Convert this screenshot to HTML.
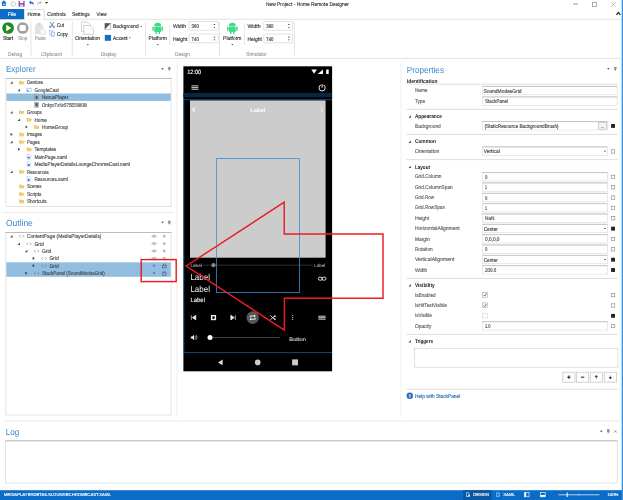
<!DOCTYPE html>
<html lang="en"><head><meta charset="utf-8"><title>New Project - Home Remote Designer</title>
<style>
html,body{margin:0;padding:0;background:#fff;overflow:hidden}
svg{display:block;will-change:transform;font-family:"Liberation Sans", sans-serif;text-rendering:geometricPrecision}
</style></head><body>
<svg width="623" height="500" viewBox="0 0 623 500">
<rect x="0.00" y="0.00" width="623.00" height="500.00" fill="#fff"/>
<path d="M3.9 0.2L1.2 2.9h0.8v3.1h3.8v-3.1h0.8z" fill="#1a6fd0" />
<rect x="3.30" y="3.60" width="1.20" height="1.50" fill="#fff"/>
<circle cx="13.20" cy="4.00" r="2.30" fill="#fff" stroke="#c4c4c4" stroke-width="0.9"/>
<rect x="18.60" y="0.90" width="6.00" height="5.70" fill="#8a3fb0"/>
<rect x="19.90" y="0.90" width="3.40" height="2.20" fill="#fff"/>
<rect x="20.10" y="4.40" width="3.00" height="2.20" fill="#e8d8f0"/>
<path d="M29 2.2l2-1.6v1.2c2.4 0 3.2 1.6 2.6 4c-0.2-1.6-1-2.4-2.6-2.4v1.2z" fill="#1a6fd0" />
<path d="M42 2.2l-2-1.6v1.2c-2.4 0-3.2 1.6-2.6 4c0.2-1.6 1-2.4 2.6-2.4v1.2z" fill="#c4c4c4" />
<path d="M45.10 1.90h3l-1.50 1.8z" fill="#222" />
<text x="266.00" y="6.27" font-size="5.5" fill="#333" textLength="83.00" lengthAdjust="spacingAndGlyphs" stroke="#333" stroke-width="0.14">New Project - Home Remote Designer</text>
<line x1="573.00" y1="4.00" x2="578.00" y2="4.00" stroke="#888" stroke-width="0.9"/>
<rect x="592.50" y="2.30" width="4.00" height="4.20" fill="none" stroke="#969696" stroke-width="0.8"/>
<path d="M611.2 2.3l4.5 4.5M615.7 2.3l-4.5 4.5" fill="none" stroke="#aaa" stroke-width="0.7" />
<path d="M616.4 14.8l2-2.4l2 2.4" fill="none" stroke="#222" stroke-width="1.2" />
<line x1="0.00" y1="19.30" x2="621.50" y2="19.30" stroke="#dadada" stroke-width="0.8"/>
<rect x="0.00" y="9.00" width="24.00" height="10.20" fill="#0b6cc7"/>
<text x="12.00" y="15.97" font-size="5.5" fill="#fff" text-anchor="middle" textLength="8.00" lengthAdjust="spacingAndGlyphs" stroke="#fff" stroke-width="0.14">File</text>
<path d="M24.6 19.7V9.6H44.2V19.7" fill="#fff" stroke="#d0d0d0" stroke-width="0.7" />
<text x="27.40" y="15.97" font-size="5.5" fill="#333" textLength="13.00" lengthAdjust="spacingAndGlyphs" stroke="#333" stroke-width="0.14">Home</text>
<text x="47.30" y="15.97" font-size="5.5" fill="#333" textLength="18.40" lengthAdjust="spacingAndGlyphs" stroke="#333" stroke-width="0.14">Controls</text>
<text x="72.00" y="15.97" font-size="5.5" fill="#333" textLength="17.60" lengthAdjust="spacingAndGlyphs" stroke="#333" stroke-width="0.14">Settings</text>
<text x="96.60" y="15.97" font-size="5.5" fill="#333" textLength="10.00" lengthAdjust="spacingAndGlyphs" stroke="#333" stroke-width="0.14">View</text>
<line x1="0.00" y1="58.40" x2="621.00" y2="58.40" stroke="#e0e0e0" stroke-width="0.9"/>
<line x1="31.00" y1="21.70" x2="31.00" y2="56.00" stroke="#dcdcdc" stroke-width="0.8"/>
<line x1="72.30" y1="21.70" x2="72.30" y2="56.00" stroke="#dcdcdc" stroke-width="0.8"/>
<line x1="145.60" y1="21.70" x2="145.60" y2="56.00" stroke="#dcdcdc" stroke-width="0.8"/>
<line x1="219.40" y1="21.70" x2="219.40" y2="56.00" stroke="#dcdcdc" stroke-width="0.8"/>
<line x1="294.40" y1="21.70" x2="294.40" y2="56.00" stroke="#dcdcdc" stroke-width="0.8"/>
<circle cx="8.10" cy="28.00" r="5.85" fill="#1e8a22"/>
<path d="M6.2 24.7v6.6l5.2-3.3z" fill="#fff" />
<circle cx="22.70" cy="28.00" r="5.85" fill="#a0a0a0"/>
<rect x="19.60" y="24.90" width="6.20" height="6.20" fill="#fff" rx="1.3"/>
<text x="3.10" y="39.97" font-size="5.5" fill="#222" textLength="10.00" lengthAdjust="spacingAndGlyphs" stroke="#222" stroke-width="0.14">Start</text>
<text x="17.90" y="39.97" font-size="5.5" fill="#9a9a9a" textLength="9.40" lengthAdjust="spacingAndGlyphs" stroke="#9a9a9a" stroke-width="0.14">Stop</text>
<text x="8.10" y="55.97" font-size="5.5" fill="#969ba6" textLength="14.10" lengthAdjust="spacingAndGlyphs" stroke="#969ba6" stroke-width="0.14">Debug</text>
<rect x="35.00" y="24.60" width="8.00" height="9.60" fill="#e2e2e2"/>
<rect x="37.20" y="23.00" width="3.60" height="2.60" fill="#d8d8d8" rx="0.6"/>
<path d="M40 28.6h3.6l2 2v3.8h-5.6z" fill="#f4f4f4" stroke="#d8d8d8" stroke-width="0.5" />
<text x="34.80" y="39.97" font-size="5.5" fill="#9c9c9c" textLength="10.80" lengthAdjust="spacingAndGlyphs" stroke="#9c9c9c" stroke-width="0.14">Paste</text>
<path d="M50 22l3.4 4.6M54.2 22l-3.4 4.6" fill="none" stroke="#555" stroke-width="0.7" />
<circle cx="50.20" cy="26.90" r="0.90" fill="none" stroke="#2a6fc0" stroke-width="0.6"/>
<circle cx="53.80" cy="26.90" r="0.90" fill="none" stroke="#2a6fc0" stroke-width="0.6"/>
<text x="56.90" y="26.77" font-size="5.5" fill="#333" textLength="7.10" lengthAdjust="spacingAndGlyphs" stroke="#333" stroke-width="0.14">Cut</text>
<rect x="49.40" y="30.40" width="3.00" height="3.80" fill="#fff" stroke="#9ab" stroke-width="0.5"/>
<rect x="51.20" y="32.00" width="3.20" height="4.20" fill="#eaf2fb" stroke="#5a8fc8" stroke-width="0.5"/>
<text x="56.90" y="35.87" font-size="5.5" fill="#333" textLength="11.10" lengthAdjust="spacingAndGlyphs" stroke="#333" stroke-width="0.14">Copy</text>
<text x="41.00" y="55.97" font-size="5.5" fill="#969ba6" textLength="20.90" lengthAdjust="spacingAndGlyphs" stroke="#969ba6" stroke-width="0.14">Clipboard</text>
<path d="M81.5 22h6l3 3v6.5h-9z" fill="#fff" stroke="#c4c4c4" stroke-width="0.7" />
<path d="M83.8 25.5h6.4l3.2 3v5.8h-9.6z" fill="#fff" stroke="#bcbcbc" stroke-width="0.7" />
<text x="75.30" y="39.97" font-size="5.5" fill="#333" textLength="24.70" lengthAdjust="spacingAndGlyphs" stroke="#333" stroke-width="0.14">Orientation</text>
<path d="M86.80 44.00h2l-1.00 1.2z" fill="#333" />
<rect x="104.90" y="23.30" width="5.90" height="6.00" fill="#fff" stroke="#999" stroke-width="0.6"/>
<path d="M104.9 23.3h5.9l-5.9 6z" fill="#555" />
<text x="113.10" y="28.17" font-size="5.5" fill="#333" textLength="25.60" lengthAdjust="spacingAndGlyphs" stroke="#333" stroke-width="0.14">Background</text>
<path d="M140.25 25.95h1.9l-0.95 1.1z" fill="#333" />
<rect x="104.80" y="34.90" width="6.20" height="5.90" fill="#1a6fc4"/>
<text x="113.10" y="39.77" font-size="5.5" fill="#333" textLength="14.60" lengthAdjust="spacingAndGlyphs" stroke="#333" stroke-width="0.14">Accent</text>
<path d="M128.85 37.45h1.9l-0.95 1.1z" fill="#333" />
<text x="101.00" y="55.97" font-size="5.5" fill="#969ba6" textLength="15.30" lengthAdjust="spacingAndGlyphs" stroke="#969ba6" stroke-width="0.14">Display</text>
<path d="M154.30 26.00a3.4 3.2 0 0 1 6.8 0z" fill="#3ddc84" />
<line x1="155.10" y1="22.60" x2="156.10" y2="23.80" stroke="#3ddc84" stroke-width="0.5"/>
<line x1="160.30" y1="22.60" x2="159.30" y2="23.80" stroke="#3ddc84" stroke-width="0.5"/>
<rect x="154.30" y="26.50" width="6.80" height="5.60" fill="#3ddc84" rx="0.6"/>
<rect x="152.40" y="26.50" width="1.50" height="4.40" fill="#3ddc84" rx="0.7"/>
<rect x="161.50" y="26.50" width="1.50" height="4.40" fill="#3ddc84" rx="0.7"/>
<rect x="155.40" y="31.00" width="1.50" height="3.20" fill="#3ddc84" rx="0.7"/>
<rect x="158.50" y="31.00" width="1.50" height="3.20" fill="#3ddc84" rx="0.7"/>
<text x="148.50" y="39.97" font-size="5.5" fill="#333" textLength="18.40" lengthAdjust="spacingAndGlyphs" stroke="#333" stroke-width="0.14">Platform</text>
<path d="M156.80 44.00h2l-1.00 1.2z" fill="#333" />
<line x1="169.80" y1="23.00" x2="169.80" y2="45.00" stroke="#dcdcdc" stroke-width="0.7"/>
<text x="172.90" y="27.87" font-size="5.5" fill="#333" textLength="13.10" lengthAdjust="spacingAndGlyphs" stroke="#333" stroke-width="0.14">Width</text>
<text x="172.90" y="40.57" font-size="5.5" fill="#333" textLength="14.40" lengthAdjust="spacingAndGlyphs" stroke="#333" stroke-width="0.14">Height</text>
<rect x="189.10" y="21.60" width="29.00" height="8.70" fill="#fff" stroke="#d6d6d6" stroke-width="0.7" rx="0.6"/>
<text x="191.60" y="28.02" font-size="5.5" fill="#333" textLength="7.20" lengthAdjust="spacingAndGlyphs" stroke="#333" stroke-width="0.14">360</text>
<path d="M213.50 25.00h1.8l-0.9 -1.2z" fill="#222" />
<path d="M213.50 26.90h1.8l-0.9 1.2z" fill="#222" />
<rect x="189.10" y="34.10" width="29.00" height="8.70" fill="#fff" stroke="#d6d6d6" stroke-width="0.7" rx="0.6"/>
<text x="191.60" y="40.52" font-size="5.5" fill="#333" textLength="7.20" lengthAdjust="spacingAndGlyphs" stroke="#333" stroke-width="0.14">740</text>
<path d="M213.50 37.50h1.8l-0.9 -1.2z" fill="#222" />
<path d="M213.50 39.40h1.8l-0.9 1.2z" fill="#222" />
<text x="175.00" y="55.97" font-size="5.5" fill="#969ba6" textLength="14.80" lengthAdjust="spacingAndGlyphs" stroke="#969ba6" stroke-width="0.14">Design</text>
<path d="M228.90 26.00a3.4 3.2 0 0 1 6.8 0z" fill="#3ddc84" />
<line x1="229.70" y1="22.60" x2="230.70" y2="23.80" stroke="#3ddc84" stroke-width="0.5"/>
<line x1="234.90" y1="22.60" x2="233.90" y2="23.80" stroke="#3ddc84" stroke-width="0.5"/>
<rect x="228.90" y="26.50" width="6.80" height="5.60" fill="#3ddc84" rx="0.6"/>
<rect x="227.00" y="26.50" width="1.50" height="4.40" fill="#3ddc84" rx="0.7"/>
<rect x="236.10" y="26.50" width="1.50" height="4.40" fill="#3ddc84" rx="0.7"/>
<rect x="230.00" y="31.00" width="1.50" height="3.20" fill="#3ddc84" rx="0.7"/>
<rect x="233.10" y="31.00" width="1.50" height="3.20" fill="#3ddc84" rx="0.7"/>
<text x="223.10" y="39.97" font-size="5.5" fill="#333" textLength="18.40" lengthAdjust="spacingAndGlyphs" stroke="#333" stroke-width="0.14">Platform</text>
<path d="M231.30 44.00h2l-1.00 1.2z" fill="#333" />
<line x1="244.40" y1="23.00" x2="244.40" y2="45.00" stroke="#dcdcdc" stroke-width="0.7"/>
<text x="247.50" y="27.87" font-size="5.5" fill="#333" textLength="13.10" lengthAdjust="spacingAndGlyphs" stroke="#333" stroke-width="0.14">Width</text>
<text x="247.50" y="40.57" font-size="5.5" fill="#333" textLength="14.40" lengthAdjust="spacingAndGlyphs" stroke="#333" stroke-width="0.14">Height</text>
<rect x="263.80" y="21.60" width="28.80" height="8.70" fill="#fff" stroke="#d6d6d6" stroke-width="0.7" rx="0.6"/>
<text x="266.30" y="28.02" font-size="5.5" fill="#333" textLength="7.20" lengthAdjust="spacingAndGlyphs" stroke="#333" stroke-width="0.14">360</text>
<path d="M288.00 25.00h1.8l-0.9 -1.2z" fill="#222" />
<path d="M288.00 26.90h1.8l-0.9 1.2z" fill="#222" />
<rect x="263.80" y="34.10" width="28.80" height="8.70" fill="#fff" stroke="#d6d6d6" stroke-width="0.7" rx="0.6"/>
<text x="266.30" y="40.52" font-size="5.5" fill="#333" textLength="7.20" lengthAdjust="spacingAndGlyphs" stroke="#333" stroke-width="0.14">740</text>
<path d="M288.00 37.50h1.8l-0.9 -1.2z" fill="#222" />
<path d="M288.00 39.40h1.8l-0.9 1.2z" fill="#222" />
<text x="246.30" y="55.97" font-size="5.5" fill="#969ba6" textLength="20.60" lengthAdjust="spacingAndGlyphs" stroke="#969ba6" stroke-width="0.14">Simulator</text>
<rect x="176.10" y="62.00" width="1.70" height="355.00" fill="#f5f5f5"/>
<rect x="399.80" y="62.00" width="1.70" height="355.00" fill="#f5f5f5"/>
<line x1="2.50" y1="212.40" x2="173.80" y2="212.40" stroke="#e6e6e6" stroke-width="0.9"/>
<line x1="2.50" y1="421.00" x2="619.50" y2="421.00" stroke="#e8e8e8" stroke-width="0.9"/>
<rect x="619.40" y="59.00" width="2.20" height="362.00" fill="#f7f9fc"/>
<text x="6.00" y="72.29" font-size="8.9" fill="#3a88ca" textLength="29.60" lengthAdjust="spacingAndGlyphs">Explorer</text>
<path d="M161.20 68.25h2.6l-1.30 1.5z" fill="#3a3a3a" />
<rect x="168.70" y="67.40" width="1.40" height="2.20" fill="#999" stroke="#555" stroke-width="0.4"/>
<line x1="169.40" y1="69.60" x2="169.40" y2="70.90" stroke="#555" stroke-width="0.5"/>
<rect x="5.90" y="78.40" width="165.20" height="128.00" fill="#fff" stroke="#dcdcdc" stroke-width="0.8"/>
<line x1="5.50" y1="78.40" x2="171.50" y2="78.40" stroke="#b2b2b2" stroke-width="0.8"/>
<rect x="6.40" y="93.50" width="164.30" height="7.40" fill="#90bde0"/>
<path d="M12.65 81.25v2.5h-2.5z" fill="#444" />
<path d="M19.20 84.40v-3.6h1.6l0.5 0.6h2.4v1" fill="#e6c468" />
<path d="M19.20 84.40l1.2-2.6h4.2l-1.2 2.6z" fill="#f2cc66" />
<text x="26.90" y="84.37" font-size="5.5" fill="#4a4a4a" textLength="16.20" lengthAdjust="spacingAndGlyphs" stroke="#4a4a4a" stroke-width="0.14">Devices</text>
<path d="M20.15 88.68v2.5h-2.5z" fill="#444" />
<rect x="26.90" y="88.23" width="4.20" height="3.30" fill="#fff" stroke="#7ab0e8" stroke-width="0.55"/>
<rect x="26.90" y="90.13" width="1.50" height="1.40" fill="#3c86d8"/>
<text x="34.40" y="91.80" font-size="5.5" fill="#4a4a4a" textLength="24.40" lengthAdjust="spacingAndGlyphs" stroke="#4a4a4a" stroke-width="0.14">GoogleCast</text>
<rect x="34.50" y="94.66" width="4.20" height="5.20" fill="#c4c4c4" stroke="#8c8c8c" stroke-width="0.4"/>
<rect x="35.50" y="95.66" width="2.20" height="3.40" fill="#555"/>
<text x="41.90" y="99.23" font-size="5.5" fill="#4a4a4a" textLength="26.30" lengthAdjust="spacingAndGlyphs" stroke="#4a4a4a" stroke-width="0.14">NexusPlayer</text>
<rect x="34.50" y="102.09" width="4.20" height="5.20" fill="#c4c4c4" stroke="#8c8c8c" stroke-width="0.4"/>
<rect x="35.50" y="103.09" width="2.20" height="3.40" fill="#555"/>
<text x="41.90" y="106.66" font-size="5.5" fill="#4a4a4a" textLength="45.00" lengthAdjust="spacingAndGlyphs" stroke="#4a4a4a" stroke-width="0.14">OnkyoTxNr575E5080B</text>
<path d="M12.65 110.97v2.5h-2.5z" fill="#444" />
<path d="M19.20 114.12v-3.6h1.6l0.5 0.6h2.4v1" fill="#e6c468" />
<path d="M19.20 114.12l1.2-2.6h4.2l-1.2 2.6z" fill="#f2cc66" />
<text x="26.90" y="114.09" font-size="5.5" fill="#4a4a4a" textLength="15.00" lengthAdjust="spacingAndGlyphs" stroke="#4a4a4a" stroke-width="0.14">Groups</text>
<path d="M20.15 118.40v2.5h-2.5z" fill="#444" />
<path d="M26.70 121.55v-3.6h1.6l0.5 0.6h2.4v1" fill="#e6c468" />
<path d="M26.70 121.55l1.2-2.6h4.2l-1.2 2.6z" fill="#f2cc66" />
<text x="34.40" y="121.52" font-size="5.5" fill="#4a4a4a" textLength="12.50" lengthAdjust="spacingAndGlyphs" stroke="#4a4a4a" stroke-width="0.14">Home</text>
<path d="M25.60 125.38v3.2l2 -1.60z" fill="#333" />
<rect x="34.20" y="125.68" width="4.80" height="3.30" fill="#f2cc6c"/>
<rect x="34.20" y="125.08" width="2.00" height="0.90" fill="#e8c060"/>
<text x="41.90" y="128.95" font-size="5.5" fill="#4a4a4a" textLength="26.30" lengthAdjust="spacingAndGlyphs" stroke="#4a4a4a" stroke-width="0.14">HomeGroup</text>
<path d="M10.60 132.81v3.2l2 -1.60z" fill="#333" />
<rect x="19.20" y="133.11" width="4.80" height="3.30" fill="#f2cc6c"/>
<rect x="19.20" y="132.51" width="2.00" height="0.90" fill="#e8c060"/>
<text x="26.90" y="136.38" font-size="5.5" fill="#4a4a4a" textLength="15.30" lengthAdjust="spacingAndGlyphs" stroke="#4a4a4a" stroke-width="0.14">Images</text>
<path d="M12.65 140.69v2.5h-2.5z" fill="#444" />
<path d="M19.20 143.84v-3.6h1.6l0.5 0.6h2.4v1" fill="#e6c468" />
<path d="M19.20 143.84l1.2-2.6h4.2l-1.2 2.6z" fill="#f2cc66" />
<text x="26.90" y="143.81" font-size="5.5" fill="#4a4a4a" textLength="12.80" lengthAdjust="spacingAndGlyphs" stroke="#4a4a4a" stroke-width="0.14">Pages</text>
<path d="M18.10 147.67v3.2l2 -1.60z" fill="#333" />
<rect x="26.70" y="147.97" width="4.80" height="3.30" fill="#f2cc6c"/>
<rect x="26.70" y="147.37" width="2.00" height="0.90" fill="#e8c060"/>
<text x="34.40" y="151.24" font-size="5.5" fill="#4a4a4a" textLength="21.80" lengthAdjust="spacingAndGlyphs" stroke="#4a4a4a" stroke-width="0.14">Templates</text>
<path d="M27.10 154.30h2.4l1.2 1.2v3.6h-3.6z" fill="#fff" stroke="#9ab4d0" stroke-width="0.45" />
<circle cx="28.70" cy="157.50" r="1.10" fill="#2a6fc0"/>
<text x="34.40" y="158.67" font-size="5.5" fill="#4a4a4a" textLength="32.70" lengthAdjust="spacingAndGlyphs" stroke="#4a4a4a" stroke-width="0.14">MainPage.xaml</text>
<path d="M27.10 161.73h2.4l1.2 1.2v3.6h-3.6z" fill="#fff" stroke="#9ab4d0" stroke-width="0.45" />
<circle cx="28.70" cy="164.93" r="1.10" fill="#2a6fc0"/>
<text x="34.40" y="166.10" font-size="5.5" fill="#4a4a4a" textLength="95.80" lengthAdjust="spacingAndGlyphs" stroke="#4a4a4a" stroke-width="0.14">MediaPlayerDetailsLoungeChromeCast.xaml</text>
<path d="M12.65 170.41v2.5h-2.5z" fill="#444" />
<path d="M19.20 173.56v-3.6h1.6l0.5 0.6h2.4v1" fill="#e6c468" />
<path d="M19.20 173.56l1.2-2.6h4.2l-1.2 2.6z" fill="#f2cc66" />
<text x="26.90" y="173.53" font-size="5.5" fill="#4a4a4a" textLength="22.00" lengthAdjust="spacingAndGlyphs" stroke="#4a4a4a" stroke-width="0.14">Resources</text>
<path d="M27.10 176.59h2.4l1.2 1.2v3.6h-3.6z" fill="#fff" stroke="#9ab4d0" stroke-width="0.45" />
<circle cx="28.70" cy="179.79" r="1.10" fill="#2a6fc0"/>
<text x="34.40" y="180.96" font-size="5.5" fill="#4a4a4a" textLength="33.50" lengthAdjust="spacingAndGlyphs" stroke="#4a4a4a" stroke-width="0.14">Resources.xaml</text>
<rect x="19.20" y="185.12" width="4.80" height="3.30" fill="#f2cc6c"/>
<rect x="19.20" y="184.52" width="2.00" height="0.90" fill="#e8c060"/>
<text x="26.90" y="188.39" font-size="5.5" fill="#4a4a4a" textLength="14.50" lengthAdjust="spacingAndGlyphs" stroke="#4a4a4a" stroke-width="0.14">Scenes</text>
<path d="M19.20 195.85v-3.6h1.6l0.5 0.6h2.4v1" fill="#e6c468" />
<path d="M19.20 195.85l1.2-2.6h4.2l-1.2 2.6z" fill="#f2cc66" />
<text x="26.90" y="195.82" font-size="5.5" fill="#4a4a4a" textLength="14.50" lengthAdjust="spacingAndGlyphs" stroke="#4a4a4a" stroke-width="0.14">Scripts</text>
<rect x="19.20" y="199.98" width="4.80" height="3.30" fill="#f2cc6c"/>
<rect x="19.20" y="199.38" width="2.00" height="0.90" fill="#e8c060"/>
<text x="26.90" y="203.25" font-size="5.5" fill="#4a4a4a" textLength="19.60" lengthAdjust="spacingAndGlyphs" stroke="#4a4a4a" stroke-width="0.14">Shortcuts</text>
<text x="6.00" y="226.09" font-size="8.9" fill="#3a88ca" textLength="26.80" lengthAdjust="spacingAndGlyphs">Outline</text>
<path d="M161.20 221.85h2.6l-1.30 1.5z" fill="#3a3a3a" />
<rect x="168.70" y="221.00" width="1.40" height="2.20" fill="#999" stroke="#555" stroke-width="0.4"/>
<line x1="169.40" y1="223.20" x2="169.40" y2="224.50" stroke="#555" stroke-width="0.5"/>
<rect x="5.90" y="232.50" width="165.20" height="182.50" fill="#fff" stroke="#dcdcdc" stroke-width="0.8"/>
<line x1="5.50" y1="232.50" x2="171.50" y2="232.50" stroke="#b2b2b2" stroke-width="0.8"/>
<rect x="6.40" y="262.30" width="164.30" height="14.50" fill="#90bde0"/>
<path d="M12.55 235.05v2.5h-2.5z" fill="#444" />
<path d="M20.60 235.00l-1.3 1.3l1.3 1.3M22.60 235.00l1.3 1.3l-1.3 1.3" fill="none" stroke="#555" stroke-width="0.5" />
<text x="26.90" y="238.17" font-size="5.5" fill="#4a4a4a" textLength="74.60" lengthAdjust="spacingAndGlyphs" stroke="#4a4a4a" stroke-width="0.14">ContentPage (MediaPlayerDetails)</text>
<path d="M151.6 236.20q2.5 -2.6 5 0q-2.5 2.6 -5 0z" fill="#fff" stroke="#777" stroke-width="0.4" />
<circle cx="154.10" cy="236.20" r="0.80" fill="none" stroke="#777" stroke-width="0.4"/>
<circle cx="164.30" cy="236.20" r="0.90" fill="none" stroke="#555" stroke-width="0.5"/>
<path d="M19.95 242.43v2.5h-2.5z" fill="#444" />
<path d="M28.10 242.38l-1.3 1.3l1.3 1.3M30.10 242.38l1.3 1.3l-1.3 1.3" fill="none" stroke="#555" stroke-width="0.5" />
<text x="34.40" y="245.55" font-size="5.5" fill="#4a4a4a" textLength="9.40" lengthAdjust="spacingAndGlyphs" stroke="#4a4a4a" stroke-width="0.14">Grid</text>
<path d="M151.6 243.58q2.5 -2.6 5 0q-2.5 2.6 -5 0z" fill="#fff" stroke="#777" stroke-width="0.4" />
<circle cx="154.10" cy="243.58" r="0.80" fill="none" stroke="#777" stroke-width="0.4"/>
<circle cx="164.30" cy="243.58" r="0.90" fill="none" stroke="#555" stroke-width="0.5"/>
<path d="M27.35 249.81v2.5h-2.5z" fill="#444" />
<path d="M35.60 249.76l-1.3 1.3l1.3 1.3M37.60 249.76l1.3 1.3l-1.3 1.3" fill="none" stroke="#555" stroke-width="0.5" />
<text x="41.90" y="252.93" font-size="5.5" fill="#4a4a4a" textLength="9.40" lengthAdjust="spacingAndGlyphs" stroke="#4a4a4a" stroke-width="0.14">Grid</text>
<path d="M151.6 250.96q2.5 -2.6 5 0q-2.5 2.6 -5 0z" fill="#fff" stroke="#777" stroke-width="0.4" />
<circle cx="154.10" cy="250.96" r="0.80" fill="none" stroke="#777" stroke-width="0.4"/>
<circle cx="164.30" cy="250.96" r="0.90" fill="none" stroke="#555" stroke-width="0.5"/>
<path d="M32.70 256.74v3.2l2 -1.60z" fill="#333" />
<path d="M43.10 257.14l-1.3 1.3l1.3 1.3M45.10 257.14l1.3 1.3l-1.3 1.3" fill="none" stroke="#555" stroke-width="0.5" />
<text x="49.40" y="260.31" font-size="5.5" fill="#4a4a4a" textLength="9.40" lengthAdjust="spacingAndGlyphs" stroke="#4a4a4a" stroke-width="0.14">Grid</text>
<path d="M151.6 258.34q2.5 -2.6 5 0q-2.5 2.6 -5 0z" fill="#fff" stroke="#777" stroke-width="0.4" />
<circle cx="154.10" cy="258.34" r="0.80" fill="none" stroke="#777" stroke-width="0.4"/>
<circle cx="164.30" cy="258.34" r="0.90" fill="none" stroke="#555" stroke-width="0.5"/>
<path d="M32.70 264.12v3.2l2 -1.60z" fill="#333" />
<path d="M43.10 264.52l-1.3 1.3l1.3 1.3M45.10 264.52l1.3 1.3l-1.3 1.3" fill="none" stroke="#555" stroke-width="0.5" />
<text x="49.40" y="267.69" font-size="5.5" fill="#4a4a4a" textLength="9.40" lengthAdjust="spacingAndGlyphs" stroke="#4a4a4a" stroke-width="0.14">Grid</text>
<circle cx="154.10" cy="265.72" r="0.80" fill="none" stroke="#445" stroke-width="0.5"/>
<rect x="162.70" y="265.52" width="3.40" height="2.40" fill="none" stroke="#445" stroke-width="0.5"/>
<path d="M163.3 265.52a1.1 1.6 0 0 1 2.2 0" fill="none" stroke="#445" stroke-width="0.5" />
<path d="M25.30 271.50v3.2l2 -1.60z" fill="#333" />
<path d="M35.60 271.90l-1.3 1.3l1.3 1.3M37.60 271.90l1.3 1.3l-1.3 1.3" fill="none" stroke="#555" stroke-width="0.5" />
<text x="41.90" y="275.07" font-size="5.5" fill="#4a4a4a" textLength="63.00" lengthAdjust="spacingAndGlyphs" stroke="#4a4a4a" stroke-width="0.14">StackPanel (SoundModesGrid)</text>
<circle cx="154.10" cy="273.10" r="0.80" fill="none" stroke="#445" stroke-width="0.5"/>
<rect x="162.70" y="272.90" width="3.40" height="2.40" fill="none" stroke="#445" stroke-width="0.5"/>
<path d="M163.3 272.90a1.1 1.6 0 0 1 2.2 0" fill="none" stroke="#445" stroke-width="0.5" />
<rect x="183.40" y="66.30" width="148.70" height="305.00" fill="#000"/>
<text x="187.20" y="73.82" font-size="6.2" fill="#fff" textLength="14.00" lengthAdjust="spacingAndGlyphs" stroke="#fff" stroke-width="0.14">12:00</text>
<path d="M311.3 69.6h5.6l-2.8 4.2z" fill="#fff" />
<path d="M323 69.6v4.3h-5.3z" fill="#fff" />
<rect x="326.20" y="69.50" width="2.50" height="4.50" fill="#fff"/>
<rect x="191.40" y="85.30" width="7.00" height="1.10" fill="#bdbdbd"/>
<rect x="191.40" y="87.00" width="7.00" height="1.10" fill="#bdbdbd"/>
<rect x="191.40" y="88.70" width="7.00" height="1.10" fill="#bdbdbd"/>
<circle cx="322.10" cy="87.90" r="3.10" fill="none" stroke="#fff" stroke-width="0.9"/>
<rect x="320.90" y="83.60" width="2.40" height="3.40" fill="#000"/>
<line x1="322.10" y1="84.10" x2="322.10" y2="87.80" stroke="#fff" stroke-width="0.9"/>
<rect x="183.40" y="92.90" width="148.70" height="4.30" fill="#0a2540"/>
<rect x="190.00" y="100.40" width="135.60" height="157.30" fill="#cccccc"/>
<path d="M194.8 107.7l-2 2l2 2" fill="none" stroke="#fff" stroke-width="1.1" />
<text x="250.20" y="111.70" font-size="5.6" fill="#fff" font-weight="700" textLength="15.00" lengthAdjust="spacingAndGlyphs">Label</text>
<circle cx="321.80" cy="107.80" r="0.65" fill="#fff"/>
<circle cx="321.80" cy="109.70" r="0.65" fill="#fff"/>
<circle cx="321.80" cy="111.60" r="0.65" fill="#fff"/>
<line x1="203.00" y1="265.20" x2="313.00" y2="265.20" stroke="#444" stroke-width="0.7"/>
<text x="190.40" y="266.68" font-size="4.4" fill="#999" textLength="11.50" lengthAdjust="spacingAndGlyphs" stroke="#999" stroke-width="0.14">Label</text>
<circle cx="213.50" cy="265.20" r="2.10" fill="#888"/>
<text x="314.10" y="266.68" font-size="4.4" fill="#999" textLength="11.20" lengthAdjust="spacingAndGlyphs" stroke="#999" stroke-width="0.14">Label</text>
<text x="190.40" y="279.68" font-size="8.6" fill="#f0f0f0" textLength="19.60" lengthAdjust="spacingAndGlyphs">Label</text>
<text x="190.40" y="291.98" font-size="8.6" fill="#f0f0f0" textLength="19.60" lengthAdjust="spacingAndGlyphs">Label</text>
<text x="190.40" y="302.32" font-size="6.2" fill="#e8e8e8" textLength="14.60" lengthAdjust="spacingAndGlyphs" stroke="#e8e8e8" stroke-width="0.14">Label</text>
<rect x="318.40" y="277.20" width="4.00" height="3.00" fill="none" stroke="#f0f0f0" stroke-width="0.9" rx="1.5"/>
<rect x="322.00" y="277.20" width="4.00" height="3.00" fill="none" stroke="#f0f0f0" stroke-width="0.9" rx="1.5"/>
<path d="M191.3 315.3v4.6M195.8 315.3v4.6l-3.4-2.3z" fill="#eee" stroke="#eee" stroke-width="0.7" />
<rect x="210.90" y="315.00" width="5.20" height="5.20" fill="#eee"/>
<rect x="212.40" y="316.30" width="2.20" height="2.60" fill="#000"/>
<path d="M235.3 315.3v4.6M230.8 315.3v4.6l3.4-2.3z" fill="#eee" stroke="#eee" stroke-width="0.7" />
<circle cx="252.70" cy="317.60" r="6.30" fill="#555"/>
<path d="M250.2 317.4v-1.4h4.4M255.2 317.8v1.4h-4.4" fill="none" stroke="#fff" stroke-width="0.9" />
<path d="M254.2 314.6l1.6 1.4l-1.6 1.4zM251.2 317.8l-1.6 1.4l1.6 1.4z" fill="#fff" />
<path d="M270.4 315.6l4.6 4.2M270.4 319.8l4.6-4.2" fill="none" stroke="#eee" stroke-width="0.9" />
<path d="M275.6 315v1.9h-1.9zM275.6 320.4v-1.9h-1.9z" fill="#eee" />
<circle cx="292.70" cy="315.60" r="0.55" fill="#eee"/>
<circle cx="292.70" cy="317.60" r="0.55" fill="#eee"/>
<circle cx="292.70" cy="319.60" r="0.55" fill="#eee"/>
<rect x="318.30" y="315.70" width="7.30" height="1.00" fill="#ccc"/>
<rect x="318.30" y="317.20" width="7.30" height="1.00" fill="#ccc"/>
<rect x="318.30" y="318.70" width="7.30" height="1.00" fill="#ccc"/>
<path d="M190.8 336.4h1.4l1.9-1.7v5.6l-1.9-1.7h-1.4z" fill="#eee" />
<path d="M195 336q1.3 1.5 0 3M195.9 334.9q2.3 2.6 0 5.2" fill="none" stroke="#eee" stroke-width="0.55" />
<line x1="210.00" y1="337.60" x2="280.00" y2="337.60" stroke="#666" stroke-width="0.7"/>
<circle cx="210.00" cy="337.50" r="2.50" fill="#fff"/>
<text x="289.30" y="340.76" font-size="5.2" fill="#ccc" textLength="16.70" lengthAdjust="spacingAndGlyphs" stroke="#ccc" stroke-width="0.14">Button</text>
<path d="M222.6 359.6v5.6l-4.6-2.8z" fill="#ddd" />
<circle cx="257.70" cy="362.40" r="2.80" fill="#ccc"/>
<rect x="292.10" y="359.40" width="5.90" height="5.90" fill="#ccc"/>
<path d="M332.1 99.7H183.8V352.6H332.1" fill="none" stroke="#1f6fb5" stroke-width="0.65" />
<rect x="216.40" y="158.60" width="83.10" height="134.00" fill="none" stroke="#3d8ad0" stroke-width="0.8"/>
<text x="406.80" y="72.79" font-size="8.9" fill="#3a88ca" textLength="37.20" lengthAdjust="spacingAndGlyphs">Properties</text>
<path d="M607.10 68.35h2.6l-1.30 1.5z" fill="#3a3a3a" />
<rect x="614.70" y="67.50" width="1.40" height="2.20" fill="#999" stroke="#555" stroke-width="0.4"/>
<line x1="615.40" y1="69.70" x2="615.40" y2="71.00" stroke="#555" stroke-width="0.5"/>
<text x="406.80" y="83.27" font-size="5.5" fill="#222" font-weight="700" textLength="30.80" lengthAdjust="spacingAndGlyphs">Identification</text>
<line x1="406.50" y1="84.20" x2="617.80" y2="84.20" stroke="#d6d6d6" stroke-width="0.8"/>
<text x="414.90" y="92.47" font-size="5.5" fill="#606060" textLength="12.60" lengthAdjust="spacingAndGlyphs" stroke="#606060" stroke-width="0.14">Name</text>
<rect x="482.30" y="86.30" width="134.90" height="8.40" fill="#fff" stroke="#dedede" stroke-width="0.7"/>
<line x1="482.30" y1="86.30" x2="617.20" y2="86.30" stroke="#b4b4b4" stroke-width="0.7"/>
<text x="483.40" y="92.57" font-size="5.5" fill="#444" textLength="38.20" lengthAdjust="spacingAndGlyphs" stroke="#444" stroke-width="0.14">SoundModesGrid</text>
<text x="414.90" y="102.87" font-size="5.5" fill="#606060" textLength="10.10" lengthAdjust="spacingAndGlyphs" stroke="#606060" stroke-width="0.14">Type</text>
<rect x="482.30" y="96.90" width="134.90" height="8.40" fill="#fff" stroke="#dedede" stroke-width="0.7"/>
<line x1="482.30" y1="96.90" x2="617.20" y2="96.90" stroke="#b4b4b4" stroke-width="0.7"/>
<text x="485.10" y="103.17" font-size="5.5" fill="#444" textLength="22.90" lengthAdjust="spacingAndGlyphs" stroke="#444" stroke-width="0.14">StackPanel</text>
<line x1="406.50" y1="109.40" x2="617.80" y2="109.40" stroke="#d6d6d6" stroke-width="0.8"/>
<path d="M410.90 115.30v2.4h-2.4z" fill="#444" />
<text x="414.90" y="118.27" font-size="5.5" fill="#222" font-weight="700" textLength="27.00" lengthAdjust="spacingAndGlyphs">Appearance</text>
<text x="414.90" y="127.77" font-size="5.5" fill="#606060" textLength="25.90" lengthAdjust="spacingAndGlyphs" stroke="#606060" stroke-width="0.14">Background</text>
<rect x="482.30" y="121.60" width="125.20" height="8.40" fill="#fff" stroke="#dedede" stroke-width="0.7"/>
<line x1="482.30" y1="121.60" x2="607.50" y2="121.60" stroke="#b4b4b4" stroke-width="0.7"/>
<text x="484.40" y="127.87" font-size="5.5" fill="#444" textLength="74.20" lengthAdjust="spacingAndGlyphs" stroke="#444" stroke-width="0.14">{StaticResource BackgroundBrush}</text>
<rect x="598.40" y="122.40" width="8.20" height="6.80" fill="#f4f4f4" stroke="#bbb" stroke-width="0.6"/>
<text x="602.50" y="128.03" font-size="4" fill="#555" text-anchor="middle" stroke="#555" stroke-width="0.14">...</text>
<rect x="611.10" y="124.00" width="3.90" height="3.90" fill="#222"/>
<line x1="406.50" y1="134.50" x2="617.80" y2="134.50" stroke="#d6d6d6" stroke-width="0.8"/>
<path d="M410.90 140.50v2.4h-2.4z" fill="#444" />
<text x="414.90" y="143.47" font-size="5.5" fill="#222" font-weight="700" textLength="21.00" lengthAdjust="spacingAndGlyphs">Common</text>
<text x="414.90" y="153.27" font-size="5.5" fill="#606060" textLength="24.50" lengthAdjust="spacingAndGlyphs" stroke="#606060" stroke-width="0.14">Orientation</text>
<rect x="482.30" y="146.90" width="125.20" height="8.40" fill="#fff" stroke="#dedede" stroke-width="0.7"/>
<line x1="482.30" y1="146.90" x2="607.50" y2="146.90" stroke="#b4b4b4" stroke-width="0.7"/>
<text x="483.70" y="153.17" font-size="5.5" fill="#444" textLength="16.10" lengthAdjust="spacingAndGlyphs" stroke="#444" stroke-width="0.14">Vertical</text>
<path d="M604.00 150.70h2l-1.00 1.2z" fill="#222" />
<rect x="611.40" y="149.80" width="3.40" height="3.40" fill="#fff" stroke="#777" stroke-width="0.55"/>
<line x1="406.50" y1="159.60" x2="617.80" y2="159.60" stroke="#d6d6d6" stroke-width="0.8"/>
<path d="M410.90 165.70v2.4h-2.4z" fill="#444" />
<text x="414.90" y="168.67" font-size="5.5" fill="#222" font-weight="700" textLength="15.10" lengthAdjust="spacingAndGlyphs">Layout</text>
<text x="414.90" y="178.47" font-size="5.5" fill="#606060" textLength="26.60" lengthAdjust="spacingAndGlyphs" stroke="#606060" stroke-width="0.14">Grid.Column</text>
<rect x="482.30" y="172.60" width="125.20" height="8.40" fill="#fff" stroke="#dedede" stroke-width="0.7"/>
<line x1="482.30" y1="172.60" x2="607.50" y2="172.60" stroke="#b4b4b4" stroke-width="0.7"/>
<text x="485.00" y="178.87" font-size="5.5" fill="#444" textLength="2.40" lengthAdjust="spacingAndGlyphs" stroke="#444" stroke-width="0.14">0</text>
<rect x="611.40" y="175.20" width="3.40" height="3.40" fill="#fff" stroke="#777" stroke-width="0.55"/>
<text x="414.90" y="188.81" font-size="5.5" fill="#606060" textLength="37.80" lengthAdjust="spacingAndGlyphs" stroke="#606060" stroke-width="0.14">Grid.ColumnSpan</text>
<rect x="482.30" y="182.94" width="125.20" height="8.40" fill="#fff" stroke="#dedede" stroke-width="0.7"/>
<line x1="482.30" y1="182.94" x2="607.50" y2="182.94" stroke="#b4b4b4" stroke-width="0.7"/>
<text x="485.00" y="189.21" font-size="5.5" fill="#444" textLength="2.00" lengthAdjust="spacingAndGlyphs" stroke="#444" stroke-width="0.14">1</text>
<rect x="611.40" y="185.54" width="3.40" height="3.40" fill="#fff" stroke="#777" stroke-width="0.55"/>
<text x="414.90" y="199.15" font-size="5.5" fill="#606060" textLength="19.20" lengthAdjust="spacingAndGlyphs" stroke="#606060" stroke-width="0.14">Grid.Row</text>
<rect x="482.30" y="193.28" width="125.20" height="8.40" fill="#fff" stroke="#dedede" stroke-width="0.7"/>
<line x1="482.30" y1="193.28" x2="607.50" y2="193.28" stroke="#b4b4b4" stroke-width="0.7"/>
<text x="485.00" y="199.55" font-size="5.5" fill="#444" textLength="2.40" lengthAdjust="spacingAndGlyphs" stroke="#444" stroke-width="0.14">0</text>
<rect x="611.40" y="195.88" width="3.40" height="3.40" fill="#fff" stroke="#777" stroke-width="0.55"/>
<text x="414.90" y="209.49" font-size="5.5" fill="#606060" textLength="30.10" lengthAdjust="spacingAndGlyphs" stroke="#606060" stroke-width="0.14">Grid.RowSpan</text>
<rect x="482.30" y="203.62" width="125.20" height="8.40" fill="#fff" stroke="#dedede" stroke-width="0.7"/>
<line x1="482.30" y1="203.62" x2="607.50" y2="203.62" stroke="#b4b4b4" stroke-width="0.7"/>
<text x="485.00" y="209.89" font-size="5.5" fill="#444" textLength="2.00" lengthAdjust="spacingAndGlyphs" stroke="#444" stroke-width="0.14">1</text>
<rect x="611.40" y="206.22" width="3.40" height="3.40" fill="#fff" stroke="#777" stroke-width="0.55"/>
<text x="414.90" y="219.83" font-size="5.5" fill="#606060" textLength="14.30" lengthAdjust="spacingAndGlyphs" stroke="#606060" stroke-width="0.14">Height</text>
<rect x="482.30" y="213.96" width="125.20" height="8.40" fill="#fff" stroke="#dedede" stroke-width="0.7"/>
<line x1="482.30" y1="213.96" x2="607.50" y2="213.96" stroke="#b4b4b4" stroke-width="0.7"/>
<text x="485.00" y="220.23" font-size="5.5" fill="#444" textLength="9.50" lengthAdjust="spacingAndGlyphs" stroke="#444" stroke-width="0.14">NaN</text>
<rect x="611.40" y="216.56" width="3.40" height="3.40" fill="#fff" stroke="#777" stroke-width="0.55"/>
<text x="414.90" y="230.17" font-size="5.5" fill="#606060" textLength="44.80" lengthAdjust="spacingAndGlyphs" stroke="#606060" stroke-width="0.14">HorizontalAlignment</text>
<rect x="482.30" y="224.30" width="125.20" height="8.40" fill="#fff" stroke="#dedede" stroke-width="0.7"/>
<line x1="482.30" y1="224.30" x2="607.50" y2="224.30" stroke="#b4b4b4" stroke-width="0.7"/>
<text x="483.70" y="230.57" font-size="5.5" fill="#444" textLength="14.20" lengthAdjust="spacingAndGlyphs" stroke="#444" stroke-width="0.14">Center</text>
<path d="M604.00 228.00h2l-1.00 1.2z" fill="#222" />
<rect x="611.10" y="226.70" width="3.90" height="3.90" fill="#222"/>
<text x="414.90" y="240.51" font-size="5.5" fill="#606060" textLength="15.00" lengthAdjust="spacingAndGlyphs" stroke="#606060" stroke-width="0.14">Margin</text>
<rect x="482.30" y="234.64" width="125.20" height="8.40" fill="#fff" stroke="#dedede" stroke-width="0.7"/>
<line x1="482.30" y1="234.64" x2="607.50" y2="234.64" stroke="#b4b4b4" stroke-width="0.7"/>
<text x="485.00" y="240.91" font-size="5.5" fill="#444" textLength="14.50" lengthAdjust="spacingAndGlyphs" stroke="#444" stroke-width="0.14">0,0,0,0</text>
<rect x="611.40" y="237.24" width="3.40" height="3.40" fill="#fff" stroke="#777" stroke-width="0.55"/>
<text x="414.90" y="250.85" font-size="5.5" fill="#606060" textLength="17.90" lengthAdjust="spacingAndGlyphs" stroke="#606060" stroke-width="0.14">Rotation</text>
<rect x="482.30" y="244.98" width="125.20" height="8.40" fill="#fff" stroke="#dedede" stroke-width="0.7"/>
<line x1="482.30" y1="244.98" x2="607.50" y2="244.98" stroke="#b4b4b4" stroke-width="0.7"/>
<text x="485.00" y="251.25" font-size="5.5" fill="#444" textLength="2.40" lengthAdjust="spacingAndGlyphs" stroke="#444" stroke-width="0.14">0</text>
<rect x="611.40" y="247.58" width="3.40" height="3.40" fill="#fff" stroke="#777" stroke-width="0.55"/>
<text x="414.90" y="261.19" font-size="5.5" fill="#606060" textLength="39.50" lengthAdjust="spacingAndGlyphs" stroke="#606060" stroke-width="0.14">VerticalAlignment</text>
<rect x="482.30" y="255.32" width="125.20" height="8.40" fill="#fff" stroke="#dedede" stroke-width="0.7"/>
<line x1="482.30" y1="255.32" x2="607.50" y2="255.32" stroke="#b4b4b4" stroke-width="0.7"/>
<text x="483.70" y="261.59" font-size="5.5" fill="#444" textLength="14.20" lengthAdjust="spacingAndGlyphs" stroke="#444" stroke-width="0.14">Center</text>
<path d="M604.00 259.02h2l-1.00 1.2z" fill="#222" />
<rect x="611.10" y="257.72" width="3.90" height="3.90" fill="#222"/>
<text x="414.90" y="271.53" font-size="5.5" fill="#606060" textLength="12.40" lengthAdjust="spacingAndGlyphs" stroke="#606060" stroke-width="0.14">Width</text>
<rect x="482.30" y="265.66" width="125.20" height="8.40" fill="#fff" stroke="#dedede" stroke-width="0.7"/>
<line x1="482.30" y1="265.66" x2="607.50" y2="265.66" stroke="#b4b4b4" stroke-width="0.7"/>
<text x="485.00" y="271.93" font-size="5.5" fill="#444" textLength="11.30" lengthAdjust="spacingAndGlyphs" stroke="#444" stroke-width="0.14">200.0</text>
<rect x="611.10" y="268.06" width="3.90" height="3.90" fill="#222"/>
<line x1="406.50" y1="278.50" x2="617.80" y2="278.50" stroke="#d6d6d6" stroke-width="0.8"/>
<path d="M410.90 284.00v2.4h-2.4z" fill="#444" />
<text x="414.90" y="286.97" font-size="5.5" fill="#222" font-weight="700" textLength="19.80" lengthAdjust="spacingAndGlyphs">Visibility</text>
<text x="414.90" y="296.67" font-size="5.5" fill="#606060" textLength="20.70" lengthAdjust="spacingAndGlyphs" stroke="#606060" stroke-width="0.14">IsEnabled</text>
<rect x="482.60" y="292.50" width="4.80" height="4.80" fill="#fff" stroke="#a8a8a8" stroke-width="0.6"/>
<path d="M483.7 294.90l1 1.2l1.8 -2.6" fill="none" stroke="#333" stroke-width="0.7" />
<rect x="611.40" y="293.40" width="3.40" height="3.40" fill="#fff" stroke="#777" stroke-width="0.55"/>
<text x="414.90" y="306.97" font-size="5.5" fill="#606060" textLength="32.00" lengthAdjust="spacingAndGlyphs" stroke="#606060" stroke-width="0.14">IsHitTestVisible</text>
<rect x="482.60" y="302.90" width="4.80" height="4.80" fill="#fff" stroke="#a8a8a8" stroke-width="0.6"/>
<path d="M483.7 305.30l1 1.2l1.8 -2.6" fill="none" stroke="#333" stroke-width="0.7" />
<rect x="611.40" y="303.80" width="3.40" height="3.40" fill="#fff" stroke="#777" stroke-width="0.55"/>
<text x="414.90" y="317.37" font-size="5.5" fill="#606060" textLength="17.00" lengthAdjust="spacingAndGlyphs" stroke="#606060" stroke-width="0.14">IsVisible</text>
<rect x="482.60" y="313.20" width="4.80" height="4.80" fill="#fff" stroke="#cfcfcf" stroke-width="0.6"/>
<rect x="611.10" y="313.90" width="3.90" height="3.90" fill="#222"/>
<text x="414.90" y="327.57" font-size="5.5" fill="#606060" textLength="16.50" lengthAdjust="spacingAndGlyphs" stroke="#606060" stroke-width="0.14">Opacity</text>
<rect x="482.30" y="321.70" width="125.20" height="8.40" fill="#fff" stroke="#dedede" stroke-width="0.7"/>
<line x1="482.30" y1="321.70" x2="607.50" y2="321.70" stroke="#b4b4b4" stroke-width="0.7"/>
<text x="485.00" y="327.97" font-size="5.5" fill="#444" textLength="5.60" lengthAdjust="spacingAndGlyphs" stroke="#444" stroke-width="0.14">1.0</text>
<rect x="611.40" y="324.40" width="3.40" height="3.40" fill="#fff" stroke="#777" stroke-width="0.55"/>
<line x1="406.50" y1="334.40" x2="617.80" y2="334.40" stroke="#d6d6d6" stroke-width="0.8"/>
<path d="M410.90 340.00v2.4h-2.4z" fill="#444" />
<text x="414.90" y="342.97" font-size="5.5" fill="#222" font-weight="700" textLength="18.10" lengthAdjust="spacingAndGlyphs">Triggers</text>
<rect x="414.40" y="348.30" width="203.50" height="18.90" fill="#fff" stroke="#d4d4d4" stroke-width="0.7"/>
<rect x="562.80" y="372.20" width="12.20" height="10.00" fill="#fdfdfd" stroke="#c2c2c2" stroke-width="0.7"/>
<path d="M567.3 377.2h3.2M568.9 375.59999999999997v3.2" fill="none" stroke="#222" stroke-width="1.1" />
<rect x="576.50" y="372.20" width="12.20" height="10.00" fill="#fdfdfd" stroke="#c2c2c2" stroke-width="0.7"/>
<path d="M580.9 377.2h3.4" fill="none" stroke="#222" stroke-width="1" />
<rect x="590.20" y="372.20" width="12.20" height="10.00" fill="#fdfdfd" stroke="#c2c2c2" stroke-width="0.7"/>
<path d="M596.3000000000001 378.8v-2.4M595.2 376.8h2.2l-1.1 -1.4z" fill="#222" stroke="#222" stroke-width="0.6" />
<rect x="604.20" y="372.20" width="12.20" height="10.00" fill="#fdfdfd" stroke="#c2c2c2" stroke-width="0.7"/>
<path d="M610.3000000000001 375.59999999999997v2.4M609.2 377.59999999999997h2.2l-1.1 1.4z" fill="#222" stroke="#222" stroke-width="0.6" />
<line x1="406.50" y1="389.20" x2="617.80" y2="389.20" stroke="#d6d6d6" stroke-width="0.8"/>
<circle cx="409.80" cy="395.80" r="3.20" fill="#2a6db5"/>
<text x="409.80" y="397.69" font-size="5" fill="#fff" font-weight="700" text-anchor="middle">?</text>
<text x="415.00" y="397.67" font-size="5.5" fill="#2b6cb0" textLength="45.20" lengthAdjust="spacingAndGlyphs" stroke="#2b6cb0" stroke-width="0.14">Help with StackPanel</text>
<rect x="141.20" y="259.60" width="35.00" height="22.00" fill="none" stroke="#ed1c24" stroke-width="1.45"/>
<path d="M186.2 266L284.2 202.2V234H383V298.2H284.4V330.2L186.2 266z" fill="none" stroke="#ed1c24" stroke-width="1.45" stroke-linejoin="miter"/>
<text x="5.80" y="434.79" font-size="8.9" fill="#3a88ca" textLength="13.50" lengthAdjust="spacingAndGlyphs">Log</text>
<path d="M600.00 430.65h2.6l-1.30 1.5z" fill="#3a3a3a" />
<rect x="607.70" y="429.80" width="1.40" height="2.20" fill="#999" stroke="#555" stroke-width="0.4"/>
<line x1="608.40" y1="432.00" x2="608.40" y2="433.30" stroke="#555" stroke-width="0.5"/>
<path d="M614.3 430.2l2.4 2.4M616.7 430.2l-2.4 2.4" fill="none" stroke="#555" stroke-width="0.5" />
<rect x="5.60" y="440.80" width="611.60" height="42.20" fill="#fff" stroke="#dcdcdc" stroke-width="0.8"/>
<line x1="5.20" y1="440.80" x2="617.60" y2="440.80" stroke="#b2b2b2" stroke-width="0.8"/>
<rect x="0.00" y="490.20" width="623.00" height="9.80" fill="#0b6cc7"/>
<text x="3.80" y="496.24" font-size="4.3" fill="#fff" textLength="107.00" lengthAdjust="spacingAndGlyphs" stroke="#fff" stroke-width="0.14">MEDIAPLAYERDETAILSLOUNGECHROMECAST.XAML</text>
<rect x="462.90" y="490.20" width="28.50" height="9.80" fill="#0a57a4"/>
<rect x="466.40" y="492.80" width="2.60" height="3.60" fill="none" stroke="#fff" stroke-width="0.5"/>
<rect x="468.20" y="494.80" width="1.60" height="1.80" fill="#fff"/>
<text x="473.20" y="496.24" font-size="4.3" fill="#fff" textLength="15.80" lengthAdjust="spacingAndGlyphs" stroke="#fff" stroke-width="0.14">DESIGN</text>
<rect x="496.70" y="492.90" width="3.00" height="3.40" fill="none" stroke="#dde" stroke-width="0.5"/>
<line x1="498.20" y1="492.90" x2="498.20" y2="496.30" stroke="#dde" stroke-width="0.4"/>
<text x="503.20" y="496.24" font-size="4.3" fill="#fff" textLength="11.70" lengthAdjust="spacingAndGlyphs" stroke="#fff" stroke-width="0.14">XAML</text>
<rect x="524.60" y="492.60" width="4.40" height="4.20" fill="none" stroke="#fff" stroke-width="0.6"/>
<rect x="524.60" y="492.60" width="1.60" height="4.20" fill="#fff"/>
<rect x="540.60" y="492.60" width="4.60" height="4.20" fill="none" stroke="#fff" stroke-width="0.6"/>
<rect x="540.60" y="495.00" width="4.60" height="1.80" fill="#fff"/>
<line x1="558.40" y1="494.80" x2="599.50" y2="494.80" stroke="#e4eefa" stroke-width="0.8"/>
<rect x="566.70" y="492.60" width="1.10" height="4.40" fill="#fff"/>
<line x1="579.00" y1="493.80" x2="579.00" y2="495.80" stroke="#cfe0f4" stroke-width="0.5"/>
<text x="607.40" y="496.24" font-size="4.3" fill="#fff" textLength="10.90" lengthAdjust="spacingAndGlyphs" stroke="#fff" stroke-width="0.14">100%</text>
<rect x="621.70" y="0.00" width="1.30" height="500.00" fill="#3b8fdc"/>
</svg>
</body></html>
